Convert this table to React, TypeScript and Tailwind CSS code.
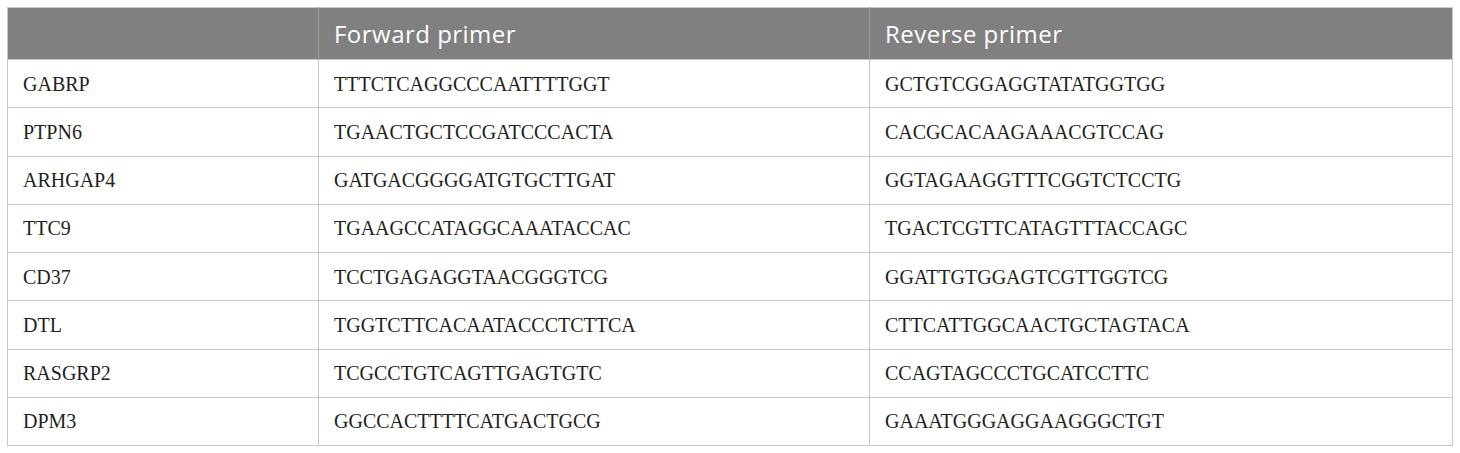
const ROWS: [string, string, string][] = [
  ["GABRP", "TTTCTCAGGCCCAATTTTGGT", "GCTGTCGGAGGTATATGGTGG"],
  ["PTPN6", "TGAACTGCTCCGATCCCACTA", "CACGCACAAGAAACGTCCAG"],
  ["ARHGAP4", "GATGACGGGGATGTGCTTGAT", "GGTAGAAGGTTTCGGTCTCCTG"],
  ["TTC9", "TGAAGCCATAGGCAAATACCAC", "TGACTCGTTCATAGTTTACCAGC"],
  ["CD37", "TCCTGAGAGGTAACGGGTCG", "GGATTGTGGAGTCGTTGGTCG"],
  ["DTL", "TGGTCTTCACAATACCCTCTTCA", "CTTCATTGGCAACTGCTAGTACA"],
  ["RASGRP2", "TCGCCTGTCAGTTGAGTGTC", "CCAGTAGCCCTGCATCCTTC"],
  ["DPM3", "GGCCACTTTTCATGACTGCG", "GAAATGGGAGGAAGGGCTGT"],
];

export default function App() {
  return (
    <div className="w-[1460px] h-[453px] bg-white pt-[7px] pl-[7px]">
      <table className="w-[1446px] table-fixed border-collapse border border-[#c8c8c8]">
        <colgroup>
          <col className="w-[311px]" />
          <col className="w-[551px]" />
          <col />
        </colgroup>
        <thead>
          <tr className="h-[52px] bg-[#808080] text-white font-['Open_Sans',sans-serif] text-[24px] tracking-[0.02em]">
            <th className="border-r border-[#a0a0a0] px-[15px] text-left font-normal"></th>
            <th className="border-r border-[#a0a0a0] px-[15px] text-left font-normal">Forward primer</th>
            <th className="px-[15px] text-left font-normal">Reverse primer</th>
          </tr>
        </thead>
        <tbody className="font-['Liberation_Serif',serif] text-[20px] text-[#231f20]">
          {ROWS.map(([gene, fwd, rev]) => (
            <tr key={gene} className="h-[48.25px]">
              <td className="border border-[#c8c8c8] px-[15px]">{gene}</td>
              <td className="border border-[#c8c8c8] px-[15px]">{fwd}</td>
              <td className="border border-[#c8c8c8] px-[15px]">{rev}</td>
            </tr>
          ))}
        </tbody>
      </table>
    </div>
  );
}
